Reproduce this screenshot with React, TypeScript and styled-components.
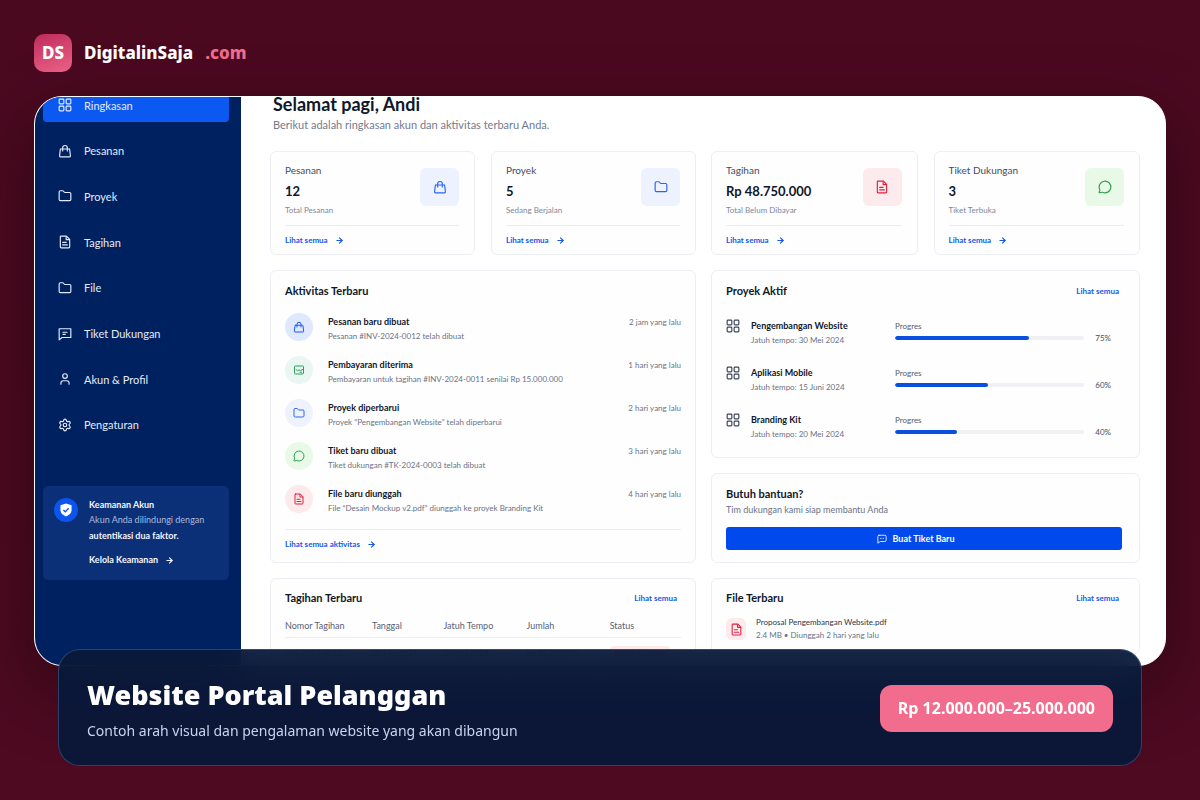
import React from "react";
import styled, { createGlobalStyle } from "styled-components";
import { ArrowRight, Folder, MessageCircle, Settings, User } from "lucide-react";

const GlobalStyle = createGlobalStyle`
  *, *::before, *::after { box-sizing: border-box; }
  body {
    margin: 0;
    background: #4b0920;
    font-family: "Noto Sans", "Open Sans", sans-serif;
  }
  h1, h2, h3, p, ul { margin: 0; padding: 0; }
  ul { list-style: none; }
  a { color: inherit; text-decoration: none; }
  svg { display: block; flex: none; }
`;

/* ---------- icons ---------- */

type IconProps = { size?: number; strokeWidth?: number };

const Stroke = ({ size = 14, strokeWidth = 2, children }: IconProps & { children: React.ReactNode }) => (
  <svg
    width={size}
    height={size}
    viewBox="0 0 24 24"
    fill="none"
    stroke="currentColor"
    strokeWidth={strokeWidth}
    strokeLinecap="round"
    strokeLinejoin="round"
    aria-hidden="true"
  >
    {children}
  </svg>
);

const GridIcon = (p: IconProps) => (
  <Stroke {...p}>
    <rect x="2" y="2" width="8" height="8" rx="1.5" />
    <rect x="14" y="2" width="8" height="8" rx="1.5" />
    <rect x="2" y="14" width="8" height="8" rx="1.5" />
    <rect x="14" y="14" width="8" height="8" rx="1.5" />
  </Stroke>
);

const BagIcon = (p: IconProps) => (
  <Stroke {...p}>
    <path d="M5 8.5h14a1 1 0 0 1 1 .9l1.3 11a1.4 1.4 0 0 1-1.4 1.6H4.100a1.4 1.4 0 0 1-1.400-1.600l1.300-11a1 1 0 0 1 1-.9z" />
    <path d="M8 12V6.500a4 4 0 0 1 8 0V12" />
  </Stroke>
);

const DocIcon = (p: IconProps) => (
  <Stroke {...p}>
    <path d="M5 2h9.500L20 7.500V20.500a1.500 1.500 0 0 1-1.500 1.500h-13A1.500 1.500 0 0 1 4 20.500V3a1 1 0 0 1 1-1z" />
    <path d="M14 2.500V8h5.500M8 12.500h6M8 17h8" />
  </Stroke>
);

const TicketIcon = (p: IconProps) => (
  <Stroke {...p}>
    <path d="M2 3h20v15H7l-5 4z" />
    <path d="M8.500 9h7M8.500 12.500h4" />
  </Stroke>
);

const ChatIcon = (p: IconProps) => (
  <Stroke {...p}>
    <path d="M5 3h14a3 3 0 0 1 3 3v9a3 3 0 0 1-3 3H8l-6 4V6a3 3 0 0 1 3-3z" />
    <path d="M8.500 10.500h.1M12 10.500h.1M15.500 10.500h.1" />
  </Stroke>
);

const PaymentIcon = (p: IconProps) => (
  <Stroke {...p}>
    <path d="M21 8V6a2 2 0 0 0-2-2H5a2 2 0 0 0-2 2v12a2 2 0 0 0 2 2h14a2 2 0 0 0 2-2V8" />
    <path d="M6 11l3 2.500 3-2 2.500 2L21 10M14 16.500h3" />
  </Stroke>
);

const ShieldIcon = ({ size = 14 }: IconProps) => (
  <svg width={size} height={size} viewBox="0 0 24 24" aria-hidden="true">
    <path d="M12 1l9.500 3v8.500c0 5-4 8.500-9.500 10.500-5.500-2-9.500-5.500-9.500-10.500V4z" fill="#fff" />
    <path d="M7.500 12l3.200 3.200L16.500 9" fill="none" stroke="#0b55ee" strokeWidth="2.400" />
  </svg>
);

/* ---------- page shell ---------- */

const UI = `"Lato", "Liberation Sans", sans-serif`;

const Page = styled.div`
  display: flex;
  flex-direction: column;
  height: 100vh;
  min-height: 640px;
  padding: 34px;
  background: linear-gradient(180deg, #4b0920, #4d0a21);
`;

const Brand = styled.header`
  display: flex;
  align-items: center;
  gap: 12px;
  margin-bottom: 24px;
  color: #fff;
  font-size: 17px;
  font-weight: 800;
  line-height: 24px;
`;

const BrandMark = styled.span`
  display: grid;
  place-items: center;
  width: 38px;
  height: 38px;
  border-radius: 10px;
  background: linear-gradient(160deg, #bd2b5c, #f0648a);
`;

const BrandSuffix = styled.span`
  color: #f26d8d;
`;

const Frame = styled.main`
  flex: 1 1 0;
  min-height: 0;
  overflow: hidden;
  border: 1px solid #fff;
  border-radius: 28px;
  background: #fff;
  box-shadow: 0 24px 70px rgba(0, 0, 0, 0.4);
`;

const Portal = styled.div`
  display: grid;
  grid-template-columns: 206px minmax(0, 1fr);
  min-height: 100%;
  color: #0f172a;
  font-family: ${UI};
`;

/* ---------- sidebar ---------- */

const Sidebar = styled.aside`
  padding: 0 12px 0 8px;
  background: #00215f;
`;

const Nav = styled.nav`
  display: flex;
  flex-direction: column;
  justify-content: space-between;
  height: 354px;
  margin-top: -9px;
`;

const NavItem = styled.a<{ $active?: boolean }>`
  display: flex;
  align-items: center;
  gap: 12px;
  height: 34px;
  padding: 0 15px;
  border-radius: 4px;
  background: ${(p) => (p.$active ? "#0c59f2" : "transparent")};
  color: #e3ebfa;
  font-size: 11px;
`;

const Security = styled.section`
  display: flex;
  gap: 11px;
  margin-top: 44px;
  padding: 12px 11px;
  border-radius: 5px;
  background: #0c3077;
  color: #f1f5ff;
  font-size: 9px;
  line-height: 16px;
`;

const SecurityBadge = styled.span`
  display: grid;
  place-items: center;
  flex: none;
  width: 24px;
  height: 24px;
  border-radius: 50%;
  background: #0b55ee;
`;

const SecurityTitle = styled.h3`
  font-size: 9px;
  line-height: 14px;
`;

const SecurityText = styled.p`
  color: #a9bbdf;

  strong { color: #f1f5ff; }
`;

const SecurityLink = styled.a`
  display: flex;
  align-items: center;
  gap: 7px;
  margin-top: 8px;
  font-weight: 700;
`;

/* ---------- content ---------- */

const Content = styled.div`
  padding: 0 25px 0 29px;
`;

const Greeting = styled.h1`
  padding-left: 3px;
  font-size: 18px;
  line-height: 14px;
`;

const Intro = styled.p`
  padding-left: 3px;
  margin: 6px 0 18px;
  color: #737b8f;
  font-size: 11px;
  line-height: 16px;
`;

const Columns = styled.div`
  display: grid;
  grid-template-columns: 426fr 429fr;
  gap: 15px;
`;

const Column = styled.div`
  display: flex;
  flex-direction: column;
  gap: 15px;
  min-width: 0;
`;

const Pair = styled.div`
  display: grid;
  grid-template-columns: 1fr 1fr;
  gap: 16px;
`;

const Card = styled.section`
  border: 1px solid #eceef3;
  border-radius: 6px;
  background: #fefefe;
`;

const StatCard = styled(Card)`
  padding: 9px 15px 6px 14px;
`;

const StatTop = styled.div`
  display: flex;
  justify-content: space-between;
  padding-bottom: 7px;
  border-bottom: 1px solid #eceef3;
`;

const StatLabel = styled.p`
  color: #454c61;
  font-size: 10px;
  line-height: 19px;
`;

const StatValue = styled.p`
  font-size: 13px;
  font-weight: 700;
  line-height: 22px;
`;

const StatNote = styled.p`
  color: #7f8799;
  font-size: 8px;
  line-height: 16px;
`;

type Tone = "blue" | "sky" | "red" | "green" | "mint";

const tones: Record<Tone, { fg: string; bg: string }> = {
  blue: { fg: "#1d5bf0", bg: "#dfe8fc" },
  sky: { fg: "#2b66f0", bg: "#edf2fe" },
  red: { fg: "#dc2240", bg: "#fdeaec" },
  green: { fg: "#2f9e4f", bg: "#e9f9e7" },
  mint: { fg: "#2f9e5c", bg: "#eaf6f1" },
};

const IconTile = styled.span<{ $tone: Tone }>`
  display: grid;
  place-items: center;
  width: 39px;
  height: 38px;
  margin-top: 7px;
  border-radius: 6px;
  color: ${(p) => tones[p.$tone].fg};
  background: ${(p) => tones[p.$tone].bg};
`;

const MoreLink = styled.a`
  display: inline-flex;
  align-items: center;
  gap: 7px;
  color: #1459ea;
  font-size: 8px;
  font-weight: 700;
  line-height: 16px;
`;

const StatLink = styled(MoreLink)`
  display: flex;
  margin-top: 6px;
`;

const CardTitle = styled.h2`
  font-size: 11px;
  line-height: 16px;
`;

const CardHead = styled.div`
  display: flex;
  align-items: center;
  justify-content: space-between;
  padding-right: 4px;
`;

const ActivityCard = styled(Card)`
  padding: 12px 14px 10px;
`;

const Activities = styled.ul`
  display: grid;
  gap: 13px;
  padding: 14px 0 14px;
  border-bottom: 1px solid #eceef3;
`;

const Activity = styled.li`
  display: flex;
  gap: 15px;
`;

const Dot = styled.span<{ $tone: Tone }>`
  display: grid;
  place-items: center;
  width: 28px;
  height: 28px;
  border-radius: 50%;
  color: ${(p) => tones[p.$tone].fg};
  background: ${(p) => tones[p.$tone].bg};
`;

const ActivityBody = styled.div`
  display: flex;
  flex: 1;
  justify-content: space-between;
  min-width: 0;
  padding-top: 2px;
`;

const ItemTitle = styled.h3`
  font-size: 9px;
  line-height: 14px;
  color: #10172b;
`;

const ItemText = styled.p`
  color: #6a7287;
  font-size: 8px;
  line-height: 14px;
`;

const ActivityLink = styled(MoreLink)`
  display: flex;
  margin-top: 6px;
`;

const ProjectCard = styled(Card)`
  padding: 12px 16px 16px 14px;
`;

const Projects = styled.ul`
  display: grid;
  gap: 19px;
  padding-top: 20px;
  color: #3c445a;
`;

const Project = styled.li`
  display: grid;
  grid-template-columns: 14px minmax(0, 133fr) minmax(0, 228fr);
  column-gap: 11px;
`;

const ProgressLabel = styled.label`
  display: block;
  color: #555c70;
  font-size: 8px;
  line-height: 14px;
`;

const ProgressRow = styled.div`
  display: flex;
  align-items: center;
  gap: 11px;
  height: 10px;
  padding-right: 12px;
  color: #454c61;
  font-size: 8px;
`;

const Bar = styled.progress`
  appearance: none;
  flex: 1;
  min-width: 0;
  height: 4px;
  border: 0;
  border-radius: 2px;
  overflow: hidden;
  background: #eff1f5;

  &::-webkit-progress-bar { background: #eff1f5; }
  &::-webkit-progress-value { background: #0b4fe0; border-radius: 2px; }
`;

const HelpCard = styled(Card)`
  padding: 12px 17px 12px 14px;
`;

const HelpText = styled.p`
  margin-bottom: 9px;
  color: #6a7287;
  font-size: 9px;
  line-height: 16px;
`;

const TicketButton = styled.button`
  display: flex;
  align-items: center;
  justify-content: center;
  gap: 5px;
  width: 100%;
  height: 23px;
  padding: 0 16px 0 0;
  border: 0;
  border-radius: 3px;
  background: #0049ec;
  color: #fff;
  font: 700 9px/16px ${UI};
`;

const ListCard = styled(Card)`
  padding: 11px 16px 11px 14px;
`;

const InvoiceCard = styled(Card)`
  padding: 11px 14px;
`;

const Invoices = styled.table`
  width: 100%;
  margin-top: 12px;
  border-collapse: collapse;
  table-layout: fixed;
  font-size: 9px;
  line-height: 14px;

  th {
    padding: 1px 0 4px;
    border-bottom: 1px solid #eceef3;
    color: #596074;
    font-weight: 400;
    text-align: left;
  }
  td {
    padding: 8px 0;
    color: #7f8799;
    font-size: 8px;
  }
`;

const Col = styled.col<{ $share: number }>`
  width: ${(p) => p.$share}%;
`;

const Pill = styled.span`
  display: block;
  width: 60px;
  border-radius: 4px;
  background: #fdeaec;
  color: #dc2240;
  text-align: center;
`;

const FileItem = styled.div`
  display: flex;
  align-items: center;
  gap: 10px;
  margin-top: 10px;
`;

const FileTile = styled.span`
  display: grid;
  place-items: center;
  width: 20px;
  height: 22px;
  border-radius: 6px;
  background: #fdeaec;
  color: #dc2240;
`;

const FileName = styled.a`
  display: block;
  color: #2c344a;
  font-size: 8px;
  line-height: 12px;
`;

/* ---------- caption bar ---------- */

const Caption = styled.footer`
  position: relative;
  display: flex;
  align-items: center;
  justify-content: space-between;
  gap: 24px;
  margin: -17px 24px 0;
  padding: 24px 28px 23px;
  border: 1px solid rgba(90, 130, 180, 0.4);
  border-radius: 22px;
  background: rgba(8, 25, 58, 0.93);
  backdrop-filter: blur(18px);
`;

const CaptionTitle = styled.h2`
  color: #fff;
  font-size: 27px;
  font-weight: 900;
  line-height: 42px;
`;

const CaptionText = styled.p`
  margin-top: 4px;
  color: #c6d4ee;
  font-size: 14px;
  line-height: 22px;
`;

const Price = styled.strong`
  padding: 12px 18px;
  border-radius: 12px;
  background: #f26d8d;
  color: #fff;
  font-size: 16px;
  font-weight: 700;
  line-height: 23px;
  white-space: nowrap;
`;

/* ---------- data ---------- */

const navItems = [
  { label: "Ringkasan", icon: <GridIcon /> },
  { label: "Pesanan", icon: <BagIcon /> },
  { label: "Proyek", icon: <Folder size={14} /> },
  { label: "Tagihan", icon: <DocIcon /> },
  { label: "File", icon: <Folder size={14} /> },
  { label: "Tiket Dukungan", icon: <TicketIcon /> },
  { label: "Akun & Profil", icon: <User size={14} /> },
  { label: "Pengaturan", icon: <Settings size={14} /> },
];

type Stat = { label: string; value: string; note: string; tone: Tone; icon: React.ReactNode };

const ordersAndProjects: Stat[] = [
  { label: "Pesanan", value: "12", note: "Total Pesanan", tone: "sky", icon: <BagIcon /> },
  { label: "Proyek", value: "5", note: "Sedang Berjalan", tone: "sky", icon: <Folder size={14} /> },
];

const billsAndTickets: Stat[] = [
  { label: "Tagihan", value: "Rp 48.750.000", note: "Total Belum Dibayar", tone: "red", icon: <DocIcon /> },
  { label: "Tiket Dukungan", value: "3", note: "Tiket Terbuka", tone: "green", icon: <MessageCircle size={14} /> },
];

const activities: { title: string; text: string; time: string; tone: Tone; icon: React.ReactNode }[] = [
  { title: "Pesanan baru dibuat", text: "Pesanan #INV-2024-0012 telah dibuat", time: "2 jam yang lalu", tone: "blue", icon: <BagIcon size={12} /> },
  { title: "Pembayaran diterima", text: "Pembayaran untuk tagihan #INV-2024-0011 senilai Rp 15.000.000", time: "1 hari yang lalu", tone: "mint", icon: <PaymentIcon size={12} /> },
  { title: "Proyek diperbarui", text: "Proyek “Pengembangan Website” telah diperbarui", time: "2 hari yang lalu", tone: "sky", icon: <Folder size={12} /> },
  { title: "Tiket baru dibuat", text: "Tiket dukungan #TK-2024-0003 telah dibuat", time: "3 hari yang lalu", tone: "green", icon: <MessageCircle size={12} /> },
  { title: "File baru diunggah", text: "File “Desain Mockup v2.pdf” diunggah ke proyek Branding Kit", time: "4 hari yang lalu", tone: "red", icon: <DocIcon size={12} /> },
];

const projects = [
  { id: "web", title: "Pengembangan Website", due: "30 Mei 2024", fill: 71, done: "75%" },
  { id: "mobile", title: "Aplikasi Mobile", due: "15 Juni 2024", fill: 49, done: "60%" },
  { id: "brand", title: "Branding Kit", due: "20 Mei 2024", fill: 33, done: "40%" },
];

const Stats = ({ items }: { items: Stat[] }) => (
  <Pair>
    {items.map((s) => (
      <StatCard key={s.label}>
        <StatTop>
          <div>
            <StatLabel>{s.label}</StatLabel>
            <StatValue>{s.value}</StatValue>
            <StatNote>{s.note}</StatNote>
          </div>
          <IconTile $tone={s.tone}>{s.icon}</IconTile>
        </StatTop>
        <StatLink href="#">
          Lihat semua <ArrowRight size={9} strokeWidth={3} />
        </StatLink>
      </StatCard>
    ))}
  </Pair>
);

export default function App() {
  return (
    <Page>
      <GlobalStyle />
      <Brand>
        <BrandMark>DS</BrandMark>
        <span>DigitalinSaja</span>
        <BrandSuffix>.com</BrandSuffix>
      </Brand>

      <Frame>
        <Portal>
          <Sidebar>
            <Nav>
              {navItems.map((n, i) => (
                <NavItem key={n.label} href="#" $active={i === 0}>
                  {n.icon}
                  {n.label}
                </NavItem>
              ))}
            </Nav>
            <Security>
              <SecurityBadge>
                <ShieldIcon size={14} />
              </SecurityBadge>
              <div>
                <SecurityTitle>Keamanan Akun</SecurityTitle>
                <SecurityText>
                  Akun Anda dilindungi dengan <strong>autentikasi dua faktor.</strong>
                </SecurityText>
                <SecurityLink href="#">
                  Kelola Keamanan <ArrowRight size={9} strokeWidth={3} />
                </SecurityLink>
              </div>
            </Security>
          </Sidebar>

          <Content>
            <Greeting>Selamat pagi, Andi</Greeting>
            <Intro>Berikut adalah ringkasan akun dan aktivitas terbaru Anda.</Intro>
            <Columns>
              <Column>
                <Stats items={ordersAndProjects} />
                <ActivityCard>
                  <CardTitle>Aktivitas Terbaru</CardTitle>
                  <Activities>
                    {activities.map((a) => (
                      <Activity key={a.title}>
                        <Dot $tone={a.tone}>{a.icon}</Dot>
                        <ActivityBody>
                          <div>
                            <ItemTitle>{a.title}</ItemTitle>
                            <ItemText>{a.text}</ItemText>
                          </div>
                          <ItemText>{a.time}</ItemText>
                        </ActivityBody>
                      </Activity>
                    ))}
                  </Activities>
                  <ActivityLink href="#">
                    Lihat semua aktivitas <ArrowRight size={9} strokeWidth={3} />
                  </ActivityLink>
                </ActivityCard>
                <InvoiceCard>
                  <CardHead>
                    <CardTitle>Tagihan Terbaru</CardTitle>
                    <MoreLink href="#">Lihat semua</MoreLink>
                  </CardHead>
                  <Invoices>
                    <colgroup>
                      <Col $share={22} />
                      <Col $share={18} />
                      <Col $share={21} />
                      <Col $share={21} />
                      <Col $share={18} />
                    </colgroup>
                    <thead>
                      <tr>
                        <th>Nomor Tagihan</th>
                        <th>Tanggal</th>
                        <th>Jatuh Tempo</th>
                        <th>Jumlah</th>
                        <th>Status</th>
                      </tr>
                    </thead>
                    <tbody>
                      <tr>
                        <td>INV-2024-0012</td>
                        <td>20 Mei 2024</td>
                        <td>30 Mei 2024</td>
                        <td>Rp 18.750.000</td>
                        <td><Pill>Belum Dibayar</Pill></td>
                      </tr>
                    </tbody>
                  </Invoices>
                </InvoiceCard>
              </Column>

              <Column>
                <Stats items={billsAndTickets} />
                <ProjectCard>
                  <CardHead>
                    <CardTitle>Proyek Aktif</CardTitle>
                    <MoreLink href="#">Lihat semua</MoreLink>
                  </CardHead>
                  <Projects>
                    {projects.map((p) => (
                      <Project key={p.id}>
                        <GridIcon />
                        <div>
                          <ItemTitle>{p.title}</ItemTitle>
                          <ItemText>Jatuh tempo: {p.due}</ItemText>
                        </div>
                        <div>
                          <ProgressLabel htmlFor={p.id}>Progres</ProgressLabel>
                          <ProgressRow>
                            <Bar id={p.id} max={100} value={p.fill} />
                            {p.done}
                          </ProgressRow>
                        </div>
                      </Project>
                    ))}
                  </Projects>
                </ProjectCard>
                <HelpCard>
                  <CardTitle>Butuh bantuan?</CardTitle>
                  <HelpText>Tim dukungan kami siap membantu Anda</HelpText>
                  <TicketButton type="button">
                    <ChatIcon size={10} />
                    Buat Tiket Baru
                  </TicketButton>
                </HelpCard>
                <ListCard>
                  <CardHead>
                    <CardTitle>File Terbaru</CardTitle>
                    <MoreLink href="#">Lihat semua</MoreLink>
                  </CardHead>
                  <FileItem>
                    <FileTile>
                      <DocIcon size={13} />
                    </FileTile>
                    <div>
                      <FileName href="#">Proposal Pengembangan Website.pdf</FileName>
                      <ItemText>2.4 MB • Diunggah 2 hari yang lalu</ItemText>
                    </div>
                  </FileItem>
                </ListCard>
              </Column>
            </Columns>
          </Content>
        </Portal>
      </Frame>

      <Caption>
        <div>
          <CaptionTitle>Website Portal Pelanggan</CaptionTitle>
          <CaptionText>Contoh arah visual dan pengalaman website yang akan dibangun</CaptionText>
        </div>
        <Price>Rp 12.000.000–25.000.000</Price>
      </Caption>
    </Page>
  );
}
